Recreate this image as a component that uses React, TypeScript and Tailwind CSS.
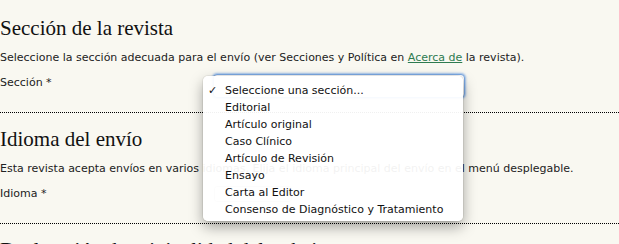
import React from 'react'

const OPTIONS = [
  'Seleccione una sección...',
  'Editorial',
  'Artículo original',
  'Caso Clínico',
  'Artículo de Revisión',
  'Ensayo',
  'Carta al Editor',
  'Consenso de Diagnóstico y Tratamiento',
]

const body = { fontFamily: '"DejaVu Sans", Verdana, sans-serif' }
const serif = { fontFamily: '"Liberation Serif", Georgia, serif' }

function Section({
  title,
  children,
  label,
}: {
  title: string
  children: React.ReactNode
  label: string
}) {
  return (
    <section className="border-b border-dotted border-black pb-[22px]">
      <h3 style={serif} className="text-[21px] leading-[24px] text-[#111]">
        {title}
      </h3>
      <p className="mt-[11px] text-[11px] leading-[14px] text-[#222]">{children}</p>
      <div className="mt-[11px] flex text-[11px] leading-[14px] text-[#222]">
        <span className="w-[213px]">{label}</span>
      </div>
    </section>
  )
}

export default function App() {
  return (
    <div style={body} className="relative h-[244px] w-[619px] overflow-hidden bg-[#f9f8f1] pt-[16px]">
      <div className="flex flex-col gap-[14px]">
        <Section title="Sección de la revista" label="Sección *">
          Seleccione la sección adecuada para el envío (ver Secciones y Política en{' '}
          <a className="text-[#2e7b50] underline">Acerca de</a> la revista).
        </Section>
        <Section title="Idioma del envío" label="Idioma *">
          Esta revista acepta envíos en varios idiomas. Elija el idioma principal del envío en el menú desplegable.
        </Section>
        <h3 style={serif} className="text-[21px] leading-[24px] text-[#111]">
          Declaración de originalidad del trabajo
        </h3>
      </div>

      {/* idioma select, seen faintly through the open menu */}
      <div className="absolute left-[214px] top-[186px] h-[16px] w-[78px] rounded-[3px] border border-[#cfcfcf] bg-white" />

      {/* focused select behind the popup */}
      <div className="absolute left-[213px] top-[74px] h-[24px] w-[252px] rounded-[4px] border border-[#7aa7e0] bg-white shadow-[0_0_2px_1px_rgba(90,150,230,0.6)]" />

      {/* open popup menu */}
      <ul className="absolute left-[203px] top-[76px] w-[260px] whitespace-nowrap rounded-[5px] bg-white/[0.94] pb-[3px] pt-[6px] text-[11px] leading-[17px] text-[#111] shadow-[0_6px_14px_rgba(0,0,0,0.35),0_0_0_1px_rgba(0,0,0,0.06)]">
        {OPTIONS.map((o, i) => (
          <li key={o} className="relative h-[17px] pl-[22px]">
            {i === 0 && <span className="absolute left-[5px] top-0">✓</span>}
            {o}
          </li>
        ))}
      </ul>
    </div>
  )
}
